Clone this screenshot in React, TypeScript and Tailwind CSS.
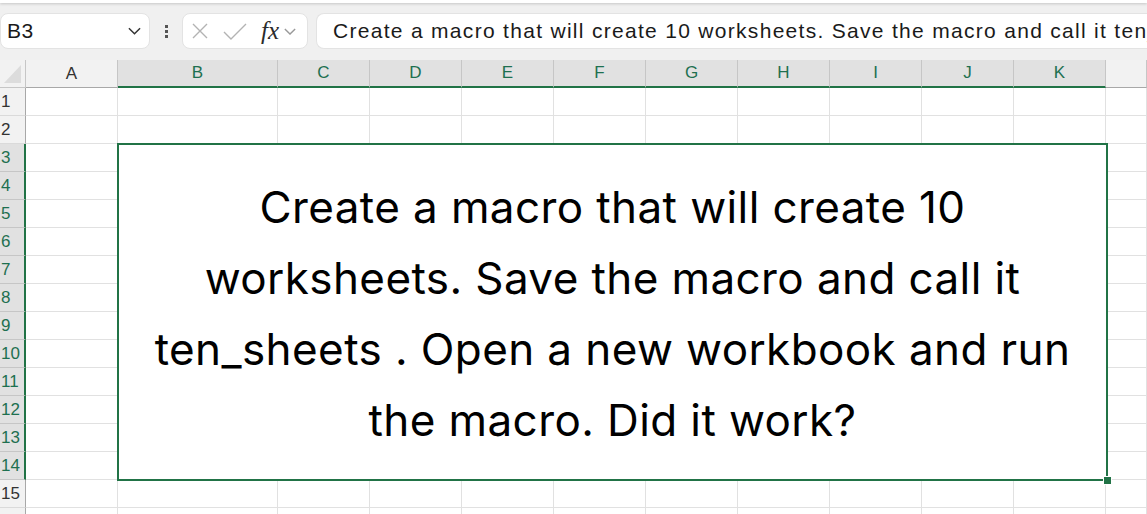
import React from "react";

const cols = ["A", "B", "C", "D", "E", "F", "G", "H", "I", "J", "K", ""];
const rows = Array.from({ length: 16 }, (_, i) => i + 1);

const isSelCol = (c: string) => c !== "" && c !== "A";
const isSelRow = (r: number) => r >= 3 && r <= 14;

function Chevron({ className }: { className?: string }) {
  return (
    <svg viewBox="0 0 14 8" className={className} fill="none" stroke="currentColor" strokeWidth="1.6">
      <path d="M1 1l6 6 6-6" />
    </svg>
  );
}

export default function App() {
  return (
    <div className="w-[1147px] h-[514px] overflow-hidden bg-white font-['Liberation_Sans',Arial,sans-serif]">
      {/* formula bar */}
      <div className="h-[60px] bg-[#f0f0f0]">
        <div className="h-[3px] bg-white shadow-[0_1px_3px_rgba(0,0,0,0.18)]" />
        <div className="mt-[10px] flex items-center h-[36px]">
          <div className="w-[150px] h-full rounded-lg bg-white border border-[#e3e3e3] flex items-center pl-[6px] pr-[8px] text-[21px] tracking-[0.5px] text-[#1a1a1a]">
            <span className="flex-1">B3</span>
            <Chevron className="w-[13px] h-[8px] text-[#333]" />
          </div>
          <div className="w-[32px] flex flex-col items-center gap-[2px]">
            <span className="w-[3px] h-[3px] bg-[#555]" />
            <span className="w-[3px] h-[3px] bg-[#555]" />
            <span className="w-[3px] h-[3px] bg-[#555]" />
          </div>
          <div className="w-[126px] h-full rounded-lg bg-white border border-[#e3e3e3] flex items-center pl-[7px]">
            <svg viewBox="0 0 20 20" className="w-[20px] h-[20px]" fill="none" stroke="#b3b3b3" strokeWidth="1.4">
              <path d="M3 3l14 14M17 3L3 17" />
            </svg>
            <svg viewBox="0 0 26 20" className="ml-[12px] w-[26px] h-[20px]" fill="none" stroke="#b3b3b3" strokeWidth="1.4">
              <path d="M2 11l7 7L24 3" />
            </svg>
            <span className="ml-[13px] font-['Liberation_Serif',serif] italic text-[25px] text-[#2b2b2b] leading-none -mt-[2px]">fx</span>
            <Chevron className="ml-[5px] w-[12px] h-[7px] text-[#999]" />
          </div>
          <div className="ml-[8px] flex-1 h-full rounded-l-lg bg-white border border-[#e3e3e3] border-r-0 flex items-center pl-[16px] text-[21px] tracking-[1.3px] text-[#1a1a1a] whitespace-nowrap overflow-hidden">
            Create a macro that will create 10 worksheets. Save the macro and call it ten_sheets . Open a new workbook and run the macro. Did it work?
          </div>
        </div>
      </div>

      {/* sheet */}
      <div className="grid grid-cols-[26px_92px_160px_repeat(9,92px)_1fr] auto-rows-[28px]">
        {/* merged B3:K14 */}
        <div className="relative col-start-3 col-span-10 row-start-4 row-span-12 -ml-px -mt-px -mr-[2px] -mb-px border-2 border-[#217346] bg-white flex items-center justify-center">
          <p className="text-center text-[44px] tracking-[0.4px] leading-[71px] text-black font-['Inter',sans-serif] pt-[4px]">
            Create a macro that will create 10
            <br />
            worksheets. Save the macro and call it
            <br />
            ten_sheets . Open a new workbook and run
            <br />
            the macro. Did it work?
          </p>
          <span className="absolute -right-[5px] -bottom-[5px] w-[7px] h-[7px] bg-[#217346] outline outline-1 outline-white" />
        </div>

        {/* corner */}
        <div className="bg-[#f2f2f2] border-r border-b border-[#c6c6c6] flex items-end justify-end p-[4px]">
          <div className="w-[18px] h-[18px] bg-[#dcdcdc] [clip-path:polygon(100%_0,100%_100%,0_100%)]" />
        </div>
        {cols.map((c, i) =>
          isSelCol(c) ? (
            <div key={i} className="bg-[#e1e1e1] border-r border-[#c6c6c6] border-b-2 border-b-[#217346] flex items-center justify-center text-[17px] text-[#1e7050]">
              {c}
            </div>
          ) : (
            <div key={i} className="bg-[#f2f2f2] border-r border-b border-[#c6c6c6] border-b-[#a8a8a8] flex items-center justify-center text-[17px] text-[#333]">
              {c}
            </div>
          )
        )}

        {rows.map((r) => (
          <React.Fragment key={r}>
            {isSelRow(r) ? (
              <div className="bg-[#e1e1e1] border-b border-[#c6c6c6] border-r-2 border-r-[#217346] flex items-center pl-px text-[17px] text-[#1e7050]">
                {r}
              </div>
            ) : (
              <div className="bg-[#f2f2f2] border-b border-[#dadada] border-r border-r-[#a8a8a8] flex items-center pl-px text-[17px] text-[#333]">
                {r < 16 ? r : ""}
              </div>
            )}
            {cols.map((c, i) =>
              isSelRow(r) && isSelCol(c) ? null : (
                <div key={i} className="border-r border-b border-[#e1e1e1]" />
              )
            )}
          </React.Fragment>
        ))}
      </div>
    </div>
  );
}
